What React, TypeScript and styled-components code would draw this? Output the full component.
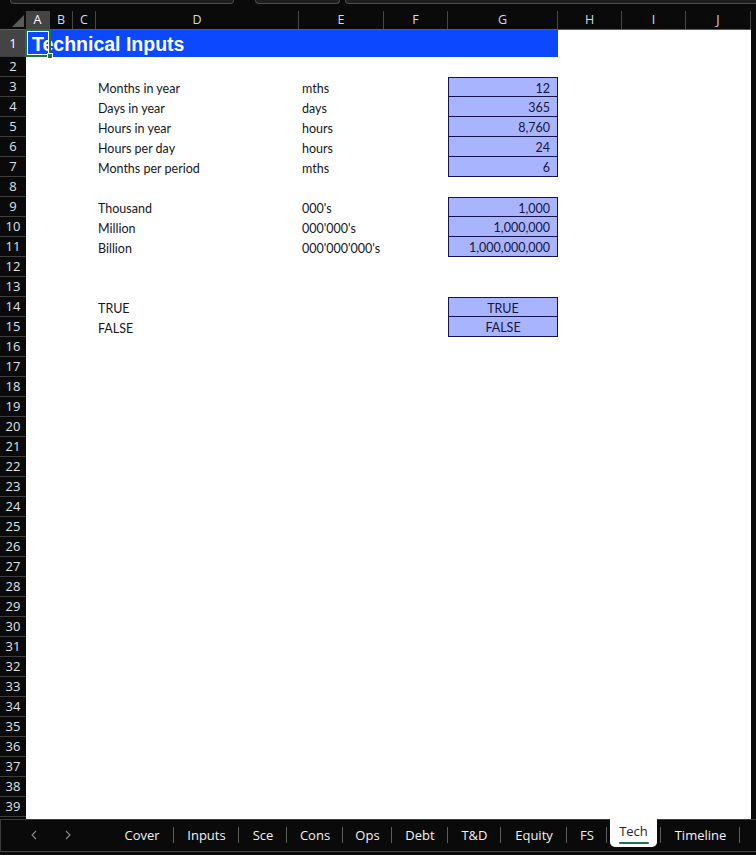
import styled, { createGlobalStyle } from 'styled-components';

const COLS = '26px 24px 23px 23px 203px 85px 64px 110px 64px 64px 65px';

type Line = {
  label?: string;
  unit?: string;
  value?: string;
  center?: boolean;
  first?: boolean;
};

const LINES: Record<number, Line> = {
  3: { label: 'Months in year', unit: 'mths', value: '12', first: true },
  4: { label: 'Days in year', unit: 'days', value: '365' },
  5: { label: 'Hours in year', unit: 'hours', value: '8,760' },
  6: { label: 'Hours per day', unit: 'hours', value: '24' },
  7: { label: 'Months per period', unit: 'mths', value: '6' },
  9: { label: 'Thousand', unit: "000's", value: '1,000', first: true },
  10: { label: 'Million', unit: "000'000's", value: '1,000,000' },
  11: { label: 'Billion', unit: "000'000'000's", value: '1,000,000,000' },
  14: { label: 'TRUE', value: 'TRUE', center: true, first: true },
  15: { label: 'FALSE', value: 'FALSE', center: true },
};

const COLUMNS = ['A', 'B', 'C', 'D', 'E', 'F', 'G', 'H', 'I', 'J'];

const TABS = [
  { name: 'Cover', w: 64 },
  { name: 'Inputs', w: 65 },
  { name: 'Sce', w: 48 },
  { name: 'Cons', w: 56 },
  { name: 'Ops', w: 49 },
  { name: 'Debt', w: 56 },
  { name: 'T&D', w: 53 },
  { name: 'Equity', w: 66 },
  { name: 'FS', w: 40 },
  { name: 'Tech', w: 54, active: true },
  { name: 'Timeline', w: 79 },
];

const GlobalStyle = createGlobalStyle`
  *, *::before, *::after { box-sizing: border-box; }
  html, body { margin: 0; padding: 0; background: #0a0a0a; }
`;

const Page = styled.div`
  width: 756px;
  height: 855px;
  display: flex;
  flex-direction: column;
  background: #0a0a0a;
  overflow: hidden;
`;

const TopStrip = styled.div`
  height: 11px;
  flex: none;
  display: flex;
  align-items: flex-start;
  padding-left: 10px;
`;

const ToolBox = styled.div<{ $w?: number; $gap?: number }>`
  height: 4px;
  width: ${p => (p.$w ? `${p.$w}px` : 'auto')};
  flex: ${p => (p.$w ? 'none' : '1')};
  margin-left: ${p => p.$gap ?? 0}px;
  margin-right: ${p => (p.$w ? 0 : -10)}px;
  background: #1e1e1e;
  border: 1px solid #4d4d4d;
  border-top: none;
  border-radius: 0 0 5px 5px;
`;

const Sheet = styled.div`
  flex: 1;
  min-height: 0;
  overflow: hidden;
  display: flex;
  flex-direction: column;
  border-right: 5px solid #0a0a0a;
  background: #ffffff;
`;

const HeaderRow = styled.div`
  display: grid;
  grid-template-columns: ${COLS};
  height: 19px;
  flex: none;
  background: #0a0a0a;
  border-bottom: 1px solid #5e5e5e;
`;

const Corner = styled.div`
  display: flex;
  align-items: flex-end;
  justify-content: flex-end;
  padding: 0 2px 2px 0;
`;

const ColHead = styled.div<{ $active?: boolean }>`
  display: flex;
  align-items: center;
  justify-content: center;
  background: ${p => (p.$active ? '#444444' : 'transparent')};
  border-right: 1px solid #484848;
  color: ${p => (p.$active ? '#ffffff' : '#d4dbe6')};
  font-family: 'Open Sans', 'Noto Sans', sans-serif;
  font-size: 12.5px;
  line-height: 1;
`;

const Row = styled.div<{ $h: number }>`
  display: grid;
  grid-template-columns: ${COLS};
  height: ${p => p.$h}px;
  flex: none;
  background: #ffffff;
`;

const RowHead = styled.div<{ $active?: boolean }>`
  grid-column: 1;
  grid-row: 1;
  display: flex;
  align-items: center;
  justify-content: center;
  background: ${p => (p.$active ? '#444444' : '#0a0a0a')};
  border-bottom: 1px solid #3e3e3e;
  color: ${p => (p.$active ? '#ffffff' : '#dbe3ee')};
  font-family: 'Open Sans', 'Noto Sans', sans-serif;
  font-size: 13px;
  line-height: 1;
`;

const TitleCell = styled.div`
  grid-column: 2 / 9;
  grid-row: 1;
  display: flex;
  align-items: flex-end;
  padding: 0 0 3px 6px;
  background: #0b48ff;
  color: #ffffff;
  font-family: 'Liberation Sans', Arial, sans-serif;
  font-weight: 700;
  font-size: 19.5px;
  line-height: 1;
  white-space: nowrap;
`;

const ActiveCell = styled.div`
  grid-column: 2 / 3;
  grid-row: 1;
  margin: -1px -1px 0 -1px;
  border: 2px solid #1f7244;
  box-shadow: inset 0 0 0 1px #ffffff;
  position: relative;
  z-index: 1;
  pointer-events: none;
`;

const FillHandle = styled.span`
  position: absolute;
  right: -4px;
  bottom: -4px;
  width: 6px;
  height: 6px;
  background: #1f7244;
  border: 1px solid #ffffff;
`;

const TextCell = styled.div<{ $col: number; $pad: number }>`
  grid-column: ${p => p.$col};
  grid-row: 1;
  display: flex;
  align-items: center;
  padding-left: ${p => p.$pad}px;
  padding-top: 2px;
  color: #161622;
  font-family: Lato, 'Liberation Sans', sans-serif;
  font-size: 12.5px;
  white-space: nowrap;
`;

const InputCell = styled.div<{ $first?: boolean; $center?: boolean }>`
  grid-column: 8;
  grid-row: 1;
  display: flex;
  align-items: center;
  justify-content: ${p => (p.$center ? 'center' : 'flex-end')};
  padding: 2px ${p => (p.$center ? 0 : 7)}px 0 0;
  background: #a9b4ff;
  border: 1px solid #14144a;
  border-top: ${p => (p.$first ? '1px solid #14144a' : 'none')};
  color: #16163c;
  font-family: Lato, 'Liberation Sans', sans-serif;
  font-size: 12.5px;
  white-space: nowrap;
`;

const TabBar = styled.div`
  height: 36px;
  flex: none;
  border-top: 1px solid #3c3c3c;
`;

const TabStrip = styled.div`
  height: 32px;
  display: flex;
  border-bottom: 1px solid #464646;
`;

const NavArea = styled.div`
  width: 110px;
  flex: none;
  display: flex;
  align-items: center;
  gap: 28px;
  padding: 0 0 1px 30px;
  border-left: 1px solid #3a3a3a;
`;

const Tab = styled.div<{ $w: number }>`
  width: ${p => p.$w}px;
  flex: none;
  position: relative;
  display: flex;
  align-items: center;
  justify-content: center;
  padding-bottom: 1px;
  color: #f2f2f2;
  font-family: 'Open Sans', 'Noto Sans', sans-serif;
  font-size: 13px;

  &::after {
    content: '';
    position: absolute;
    right: 0;
    top: 7px;
    bottom: 8px;
    width: 1px;
    background: #5c5c5c;
  }
`;

const TabFace = styled.div`
  flex: 1;
  align-self: stretch;
  margin: -1px 4px 3px 3px;
  display: flex;
  flex-direction: column;
  align-items: center;
  justify-content: flex-start;
  padding-top: 4px;
  gap: 3px;
  background: #ffffff;
  border-radius: 0 0 5px 5px;
  color: #262626;
`;

const TabLabel = styled.span`
  line-height: 16px;
`;

const Underline = styled.span`
  width: 30px;
  height: 2px;
  background: #1f7244;
  border-radius: 1px;
`;

function Chevron({ dir }: { dir: 'left' | 'right' }) {
  const pts = dir === 'left' ? '5,1 1,5 5,9' : '1,1 5,5 1,9';
  return (
    <svg width="6" height="10" viewBox="0 0 6 10">
      <polyline points={pts} fill="none" stroke="#8a8a8a" strokeWidth="1.1" />
    </svg>
  );
}

function SheetRow({ n }: { n: number }) {
  if (n === 1) {
    return (
      <Row $h={27}>
        <RowHead $active>1</RowHead>
        <TitleCell>Technical Inputs</TitleCell>
        <ActiveCell>
          <FillHandle />
        </ActiveCell>
      </Row>
    );
  }
  const line = LINES[n];
  // row 40 only peeks out under row 39, so its number stays hidden
  return (
    <Row $h={20}>
      <RowHead>{n < 40 ? n : ''}</RowHead>
      {line?.label && <TextCell $col={5} $pad={2}>{line.label}</TextCell>}
      {line?.unit && <TextCell $col={6} $pad={3}>{line.unit}</TextCell>}
      {line?.value && (
        <InputCell $first={line.first} $center={line.center}>
          {line.value}
        </InputCell>
      )}
    </Row>
  );
}

export default function App() {
  const rowNums = Array.from({ length: 40 }, (_, i) => i + 1);
  return (
    <>
      <GlobalStyle />
      <Page>
        <TopStrip>
          <ToolBox $w={224} />
          <ToolBox $w={85} $gap={21} />
          <ToolBox $gap={5} />
        </TopStrip>

        <Sheet>
          <HeaderRow>
            <Corner>
              <svg width="12" height="12" viewBox="0 0 12 12">
                <polygon points="0,12 12,0 12,12" fill="#5a5a5a" />
              </svg>
            </Corner>
            {COLUMNS.map(c => (
              <ColHead key={c} $active={c === 'A'}>
                {c}
              </ColHead>
            ))}
          </HeaderRow>
          {rowNums.map(n => (
            <SheetRow key={n} n={n} />
          ))}
        </Sheet>

        <TabBar>
          <TabStrip>
            <NavArea>
              <Chevron dir="left" />
              <Chevron dir="right" />
            </NavArea>
            {TABS.map(t => (
              <Tab key={t.name} $w={t.w}>
                {t.active ? (
                  <TabFace>
                    <TabLabel>{t.name}</TabLabel>
                    <Underline />
                  </TabFace>
                ) : (
                  t.name
                )}
              </Tab>
            ))}
          </TabStrip>
        </TabBar>
      </Page>
    </>
  );
}
